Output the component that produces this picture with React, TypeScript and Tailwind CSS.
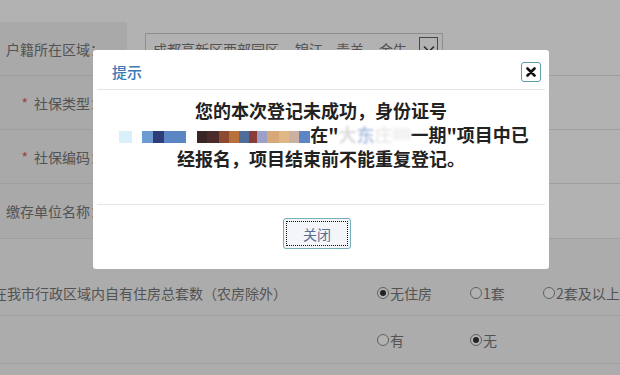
import React from 'react'

const blocks: Array<[number, string]> = [
  [6, 'transparent'],
  [13, '#d9f0fa'],
  [10, 'transparent'],
  [11, '#6c9bd2'],
  [11, '#2e3d78'],
  [22, '#5a86c4'],
  [11, 'transparent'],
  [10, '#3b2424'],
  [12, '#4b2a2a'],
  [10, '#8c4a30'],
  [10, '#b8713a'],
  [10, '#4e6d99'],
  [8, '#8b3b38'],
  [10, '#9aa0c8'],
  [12, '#d8a878'],
  [10, '#e0b888'],
  [10, '#c9b0a0'],
  [11, '#5d86c4'],
]

function Radio({ checked, label, width }: { checked?: boolean; label: string; width: string }) {
  return (
    <div className={`flex items-center ${width}`}>
      <span className="w-[12px] h-[12px] rounded-full border border-[#8a8a8a] bg-white flex items-center justify-center">
        {checked && <span className="w-[6px] h-[6px] rounded-full bg-[#333]" />}
      </span>
      <span className="ml-[1px]">{label}</span>
    </div>
  )
}

function Label({ text, star }: { text: string; star?: boolean }) {
  return (
    <div className="w-[127px] shrink-0 bg-[#f2f2f2] flex items-center justify-end pr-[23px] whitespace-nowrap">
      {star && <span className="text-[#e06060] mr-[6px]">*</span>}
      <span>{text}</span>
    </div>
  )
}

export default function App() {
  return (
    <div className="relative w-[620px] h-[375px] overflow-hidden bg-white font-['Noto_Sans_CJK_SC',sans-serif] text-[14px] leading-[20px] text-[#777]">
      {/* form underneath */}
      <div className="pt-[22px]">
        <div className="flex h-[54px] border-b border-[#e4e4e4]">
          <Label text="户籍所在区域：" star />
          <div className="flex-1 flex items-center pl-[18px]">
            <div className="relative w-[298px] h-[31px] border border-[#cccccc] bg-white flex items-center pl-[7px] whitespace-nowrap">
              <span>成都高新区西部园区</span>
              <span className="ml-[16px]">锦江</span>
              <span className="ml-[13px]">青羊</span>
              <span className="ml-[15px]">金牛</span>
              <span className="absolute right-[4px] top-[3px] w-[19px] h-[23px] border border-[#666] flex items-center justify-center">
                <svg width="12" height="8" viewBox="0 0 12 8">
                  <path d="M1 1.5 L6 6.5 L11 1.5" fill="none" stroke="#444" strokeWidth="1.6" />
                </svg>
              </span>
            </div>
          </div>
        </div>
        <div className="flex h-[54px] border-b border-[#e4e4e4]">
          <Label text="社保类型：" star />
          <div className="flex-1" />
        </div>
        <div className="flex h-[54px] border-b border-[#e4e4e4]">
          <Label text="社保编码：" star />
          <div className="flex-1" />
        </div>
        <div className="flex h-[55px] border-b border-[#e4e4e4]">
          <Label text="缴存单位名称：" />
          <div className="flex-1" />
        </div>
        <div className="bg-[#f7f7f7]">
          <div className="h-[31px]" />
          <div className="flex items-center h-[46px] border-b border-[#e4e4e4]">
            <div className="w-[287px] shrink-0 flex justify-end whitespace-nowrap">
              在我市行政区域内自有住房总套数（农房除外）
            </div>
            <div className="flex items-center pl-[90px] whitespace-nowrap">
              <Radio checked label="无住房" width="w-[93px]" />
              <Radio label="1套" width="w-[73px]" />
              <Radio label="2套及以上" width="w-[90px]" />
            </div>
          </div>
          <div className="flex items-center h-[48px] border-b border-[#e4e4e4]">
            <div className="w-[287px] shrink-0" />
            <div className="flex items-center pl-[90px] whitespace-nowrap">
              <Radio label="有" width="w-[93px]" />
              <Radio checked label="无" width="w-[73px]" />
            </div>
          </div>
          <div className="h-[20px]" />
        </div>
      </div>

      {/* mask */}
      <div className="absolute inset-0 bg-black/30" />

      {/* dialog */}
      <div className="absolute left-[93px] top-[50px] w-[456px] h-[219px] bg-white rounded-[3px]">
        <div className="h-[39px] pt-[4px] flex items-center justify-between pl-[19px] pr-[8px]">
          <span className="text-[15px] font-medium text-[#3c78b4]">提示</span>
          <button className="w-[20px] h-[20px] border border-[#5f9ea8] rounded-[3px] bg-white flex items-center justify-center">
            <svg width="10" height="10" viewBox="0 0 10 10">
              <path d="M1.5 1.5 L8.5 8.5 M8.5 1.5 L1.5 8.5" stroke="#111" strokeWidth="2.6" strokeLinecap="round" />
            </svg>
          </button>
        </div>
        <div className="mx-[4px] border-t border-[#e5e5e5]" />
        <div className="h-[114px] pt-[8px] text-[18px] leading-[24px] font-bold text-[#222] text-center">
          <div>您的本次登记未成功，身份证号</div>
          <div className="flex justify-center items-center h-[24px] whitespace-nowrap">
            <span className="flex h-[12px] mt-[6px] blur-[0.4px]">
              {blocks.map(([w, c], i) => (
                <span key={i} className="h-full" style={{ width: w, background: c }} />
              ))}
            </span>
            <span>在"</span>
            <span className="text-[#dcdcdc] blur-[1px]">大</span>
            <span className="text-[#b4c6e4] blur-[1px]">东</span>
            <span className="text-[#ececec] blur-[1px]">庄</span>
            <span className="w-[18px] h-[12px] bg-[#f3f3f3] blur-[1.5px]" />
            <span>一期"项目中已</span>
          </div>
          <div>经报名，项目结束前不能重复登记。</div>
        </div>
        <div className="mx-[4px] border-t border-[#e5e5e5]" />
        <div className="flex justify-center pt-[13px] pr-[8px]">
          <button className="w-[68px] h-[31px] border border-[#74aeb6] rounded-[3px] bg-[#f4f5f8] p-[2px]">
            <span className="flex items-center justify-center w-full h-full border border-dotted border-[#111] text-[14px] font-normal text-[#5a7090]">
              关闭
            </span>
          </button>
        </div>
      </div>
    </div>
  )
}
